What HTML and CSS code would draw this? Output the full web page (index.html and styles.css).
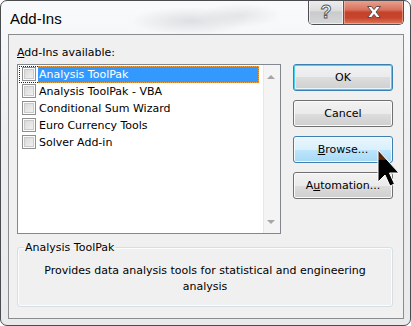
FILE: index.html
```html
<!DOCTYPE html>
<html lang="en">

<head>
    <meta charset="UTF-8">
    <title>Add-Ins</title>
    <link rel="stylesheet" href="styles.css">
</head>

<body>
    <div class="window">
        <div class="titlebar">
            <span class="title">Add-Ins</span>
            <div class="caption-btns">
                <div class="cap-help">?</div>
                <div class="cap-close">
                    <svg width="16" height="12" viewBox="0 0 16 12">
                        <path d="M1.5 0.5 H5.5 L8 3.6 L10.5 0.5 H14.5 L10 6 L14.5 11.5 H10.5 L8 8.4 L5.5 11.5 H1.5 L6 6 Z"
                            fill="#fff" stroke="#5a4a48" stroke-width="1" stroke-linejoin="round" />
                    </svg>
                </div>
            </div>
        </div>

        <div class="client">
            <div class="main-row">
                <div class="list-col">
                    <div class="label"><u>A</u>dd-Ins available:</div>
                    <div class="listbox">
                        <ul class="items">
                            <li class="item selected"><span class="check-cell"><span class="check"></span></span><span class="text">Analysis ToolPak</span></li>
                            <li class="item"><span class="check-cell"><span class="check"></span></span><span class="text">Analysis ToolPak - VBA</span></li>
                            <li class="item"><span class="check-cell"><span class="check"></span></span><span class="text">Conditional Sum Wizard</span></li>
                            <li class="item"><span class="check-cell"><span class="check"></span></span><span class="text">Euro Currency Tools</span></li>
                            <li class="item"><span class="check-cell"><span class="check"></span></span><span class="text">Solver Add-in</span></li>
                        </ul>
                        <div class="scrollbar">
                            <span class="arrow up"></span>
                            <span class="arrow down"></span>
                        </div>
                    </div>
                </div>
                <div class="btn-col">
                    <button class="btn default">OK</button>
                    <button class="btn">Cancel</button>
                    <button class="btn hover"><u>B</u>rowse...</button>
                    <button class="btn">A<u>u</u>tomation...</button>
                </div>
            </div>

            <fieldset class="group">
                <legend>Analysis ToolPak</legend>
                <p>Provides data analysis tools for statistical and engineering analysis</p>
            </fieldset>
        </div>

        <svg class="cursor" width="24" height="40" viewBox="0 0 24 40">
            <defs>
                <linearGradient id="cur" x1="0" y1="0" x2="0" y2="1">
                    <stop offset="0" stop-color="#3a1606" />
                    <stop offset="0.24" stop-color="#5a2608" />
                    <stop offset="0.25" stop-color="#e07a30" />
                    <stop offset="0.27" stop-color="#000" />
                    <stop offset="1" stop-color="#000" />
                </linearGradient>
            </defs>
            <path d="M1 1 L1 33 L8 26 L13 37 L17.5 35 L12.5 24 L22 24 Z" fill="url(#cur)" stroke="#fff"
                stroke-width="1" stroke-linejoin="miter" />
        </svg>
    </div>
</body>

</html>
```

FILE: styles.css
```css
body {
    margin: 0;
    background: #ffffff;
    font-family: 'DejaVu Sans', 'Liberation Sans', sans-serif;
    font-size: 11px;
    color: #000;
}

.window {
    position: relative;
    box-sizing: border-box;
    width: 411px;
    height: 326px;
    border: 1px solid #4a4c50;
    border-radius: 7px;
    background:
        radial-gradient(ellipse 60px 14px at 190px 20px, rgba(200, 202, 206, 0.55), rgba(200, 202, 206, 0)),
        radial-gradient(ellipse 40px 12px at 240px 14px, rgba(210, 212, 216, 0.5), rgba(210, 212, 216, 0)),
        linear-gradient(#f9fafb, #eeeff1 40%, #e9eaec);
    overflow: hidden;
}

/* title bar */

.titlebar {
    display: flex;
    justify-content: space-between;
    align-items: flex-start;
    height: 33px;
}

.title {
    font-family: 'Liberation Sans', Arial, sans-serif;
    font-size: 15px;
    line-height: 17px;
    padding: 9px 0 0 9px;
    color: #000;
}

.caption-btns {
    display: flex;
    margin-right: 6px;
    margin-top: -1px;
    border: 1px solid #4e4e52;
    border-top: none;
    border-radius: 0 0 5px 5px;
    overflow: hidden;
    box-shadow: 0 1px 0 rgba(255, 255, 255, 0.7);
}

.cap-help {
    width: 34px;
    height: 24px;
    border-right: 1px solid #55575c;
    background: linear-gradient(#eeeeee, #dcdcdc 45%, #c9cacc 50%, #d6d7d9);
    box-shadow: inset 0 0 0 1px rgba(255, 255, 255, 0.6);
    text-align: center;
    font-family: 'Liberation Sans', Arial, sans-serif;
    font-weight: bold;
    font-size: 18px;
    line-height: 24px;
    color: #fff;
    -webkit-text-stroke: 1px #5c5c60;
}

.cap-close {
    width: 59px;
    height: 24px;
    display: flex;
    align-items: center;
    justify-content: center;
    background: linear-gradient(#e9a593, #d8735e 40%, #c4412a 52%, #c8452d 75%, #dc7a5d);
    box-shadow: inset 0 0 0 1px rgba(255, 220, 210, 0.45);
}

/* client area */

.client {
    box-sizing: border-box;
    height: 285px;
    margin: 0 6px 0 7px;
    padding-left: 8px;
    border: 1px solid #8a8c90;
    background: #f0f0f0;
}

.main-row {
    display: flex;
}

.list-col {
    padding-top: 11px;
}

.label {
    line-height: 13px;
    margin-bottom: 5px;
}

.listbox {
    box-sizing: border-box;
    width: 264px;
    height: 170px;
    border: 1px solid #828790;
    background: #fff;
    display: flex;
}

.items {
    list-style: none;
    margin: 0;
    padding: 1px 0 0 1px;
    flex-grow: 1;
}

.item {
    display: flex;
    width: 240px;
    height: 17px;
}

.check-cell {
    box-sizing: border-box;
    width: 19px;
    height: 17px;
    padding: 0 0 0 2px;
    border: 1px dotted transparent;
    border-right: none;
}

.check {
    display: block;
    box-sizing: border-box;
    width: 14px;
    height: 14px;
    margin-top: 0;
    border: 1px solid #8e8f8f;
    background: linear-gradient(135deg, #d4d4d4, #f6f6f6);
    box-shadow: inset 0 0 0 1px #fbfbfb, inset 0 0 0 2px #c9cacb;
}

.text {
    box-sizing: border-box;
    flex-grow: 1;
    height: 17px;
    margin-left: 0;
    padding-left: 1px;
    line-height: 15px;
    border: 1px dotted transparent;
    border-left: none;
    white-space: nowrap;
}

.item.selected .check-cell {
    border-color: #222;
}

.item.selected .text {
    background: #3399ff;
    color: #fff;
    border-color: #f0a040;
}

.scrollbar {
    width: 17px;
    display: flex;
    flex-direction: column;
    justify-content: space-between;
    align-items: center;
    padding: 10px 0 9px;
    box-sizing: border-box;
    background: #f4f4f4;
    border-left: 1px solid #e8e8e8;
}

.arrow {
    width: 0;
    height: 0;
    margin-right: 2px;
    border-left: 4px solid transparent;
    border-right: 4px solid transparent;
}

.arrow.up {
    border-bottom: 4px solid #a6a6a6;
}

.arrow.down {
    border-top: 4px solid #a6a6a6;
}

/* buttons */

.btn-col {
    display: flex;
    flex-direction: column;
    gap: 9px;
    margin-left: 12px;
    padding-top: 29px;
}

.btn {
    box-sizing: border-box;
    width: 100px;
    height: 27px;
    padding: 0;
    border: 1px solid #707070;
    border-radius: 3px;
    background: linear-gradient(#f2f2f2 0%, #ebebeb 50%, #dddddd 50%, #cfcfcf 100%);
    box-shadow: inset 0 0 0 1px #fbfbfb;
    font-family: 'DejaVu Sans', 'Liberation Sans', sans-serif;
    font-size: 11px;
    color: #000;
}

.btn.default {
    border-color: #3c7fb1;
    box-shadow: inset 0 0 0 1px #48d0f7, inset 0 0 0 2px #e6f6fd;
}

.btn.hover {
    border-color: #3c7fb1;
    background: linear-gradient(#eaf6fd 0%, #d9f0fc 50%, #bee6fd 50%, #a7d9f5 100%);
    box-shadow: inset 0 0 0 1px #f6fbfe;
}

/* group box */

.group {
    box-sizing: border-box;
    width: 376px;
    margin: 7px 0 0;
    padding: 0;
    border: 1px solid #d5dfe5;
    border-radius: 3px;
    box-shadow: inset 0 0 0 1px #fafcfd;
}

.group legend {
    margin-left: 6px;
    padding: 0 1px;
    line-height: 13px;
}

.group p {
    margin: 9px 0 11px;
    padding: 0 20px;
    text-align: center;
    line-height: 16px;
}

.cursor {
    position: absolute;
    left: 376px;
    top: 148px;
}
```
